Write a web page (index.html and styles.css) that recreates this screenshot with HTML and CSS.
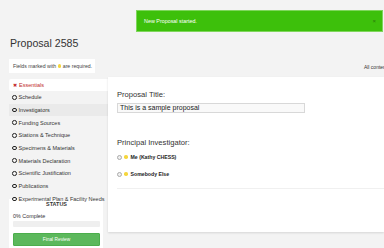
FILE: index.html
```html
<!DOCTYPE html>
<html>
<head>
<meta charset="utf-8">
<link rel="stylesheet" href="styles.css">
</head>
<body>
<div class="toast">
  <span class="toast-text">New Proposal started.</span>
  <span class="toast-close">×</span>
</div>
<div class="page">
  <h1 class="title">Proposal 2585</h1>
  <div class="toolbar">
    <div class="required">Fields marked with <span class="dot"></span> are required.</div>
    <div class="saved">All content saved</div>
  </div>
  <div class="workspace">
    <div class="sidebar">
      <div class="tab-active"><span class="xmark">✖</span>Essentials</div>
      <div class="nav-item"><span class="ring"></span>Schedule</div>
      <div class="nav-item hl"><span class="ring"></span>Investigators</div>
      <div class="nav-item"><span class="ring"></span>Funding Sources</div>
      <div class="nav-item"><span class="ring"></span>Stations &amp; Technique</div>
      <div class="nav-item"><span class="ring"></span>Specimens &amp; Materials</div>
      <div class="nav-item"><span class="ring"></span>Materials Declaration</div>
      <div class="nav-item"><span class="ring"></span>Scientific Justification</div>
      <div class="nav-item"><span class="ring"></span>Publications</div>
      <div class="nav-item"><span class="ring"></span>Experimental Plan &amp; Facility Needs</div>
      <div class="status">
        <div class="status-title">STATUS</div>
        <div class="status-pct">0% Complete</div>
        <div class="progress"></div>
        <div class="btn">Final Review</div>
      </div>
    </div>
    <div class="content">
      <div class="label">Proposal Title:</div>
      <div class="input">This is a sample proposal</div>
      <div class="label pi">Principal Investigator:</div>
      <div class="radio-row"><span class="radio"></span><span class="dot"></span><b>Me (Kathy CHESS)</b></div>
      <div class="radio-row second"><span class="radio"></span><span class="dot"></span><b>Somebody Else</b></div>
      <div class="rule"></div>
    </div>
  </div>
</div>
</body>
</html>
```
FILE: styles.css
```css
html, body {
  margin: 0;
  padding: 0;
  overflow: hidden;
}
body {
  background: #f3f3f3;
  font-family: "Liberation Sans", Arial, sans-serif;
  color: #333;
  width: 384px;
  height: 248px;
}
.toast {
  position: absolute;
  left: 136px;
  top: 10px;
  width: 247px;
  height: 22px;
  box-sizing: border-box;
  background: #3dc00b;
  border: 1px solid #7fd65c;
  display: flex;
  align-items: center;
  justify-content: space-between;
  padding: 0 6px 0 7px;
}
.toast-text {
  color: #fff;
  font-size: 5.4px;
}
.toast-close {
  color: #2a7a0a;
  font-size: 6px;
}
.page {
  padding: 36px 0 0 9px;
}
.title {
  margin: 0 0 0 1px;
  font-size: 10.6px;
  line-height: 14px;
  font-weight: normal;
  color: #333;
}
.toolbar {
  display: flex;
  justify-content: space-between;
  align-items: center;
  margin-top: 9px;
  height: 14px;
}
.required {
  background: #fff;
  height: 14px;
  line-height: 14px;
  padding: 0 3px 0 4px;
  font-size: 5.2px;
  color: #444;
  display: flex;
  align-items: center;
  gap: 1.5px;
}
.dot {
  display: inline-block;
  width: 3.5px;
  height: 3.5px;
  border-radius: 50%;
  background: #f5d63d;
}
.saved {
  font-size: 5px;
  color: #333;
  white-space: nowrap;
  margin-right: -18px;
  margin-top: 2px;
}
.workspace {
  display: flex;
  margin-top: 4px;
}
.sidebar {
  width: 99px;
  flex: none;
  padding-top: 2px;
}
.tab-active {
  height: 12px;
  background: #fff;
  border-radius: 2px 0 0 2px;
  color: #c22a2a;
  font-size: 5.5px;
  display: flex;
  align-items: center;
  padding-left: 4px;
}
.xmark {
  font-size: 5px;
  margin-right: 2px;
}
.nav-item {
  height: 12.7px;
  display: flex;
  align-items: center;
  padding-left: 3px;
  font-size: 5.5px;
  color: #333;
  white-space: nowrap;
}
.nav-item.hl {
  background: #eaeaea;
}
.ring {
  width: 2.6px;
  height: 2.6px;
  border: 1.4px solid #222;
  border-radius: 50%;
  margin-right: 2px;
  flex: none;
}
.status {
  margin-top: -6px;
  width: 94px;
  background: #fff;
  padding: 0 3px 3px 4px;
  box-sizing: border-box;
}
.status-title {
  text-align: center;
  font-weight: bold;
  font-size: 5.4px;
  line-height: 8px;
  padding-top: 1px;
}
.status-pct {
  font-size: 5.4px;
  line-height: 7px;
  margin-top: 5px;
}
.progress {
  height: 6px;
  margin-top: 1px;
  background: #efefef;
  border-radius: 1px;
}
.btn {
  margin-top: 6px;
  height: 13px;
  background: #5cb85c;
  border: 1px solid #4cae4c;
  box-sizing: border-box;
  border-radius: 1px;
  color: #fff;
  font-size: 4.8px;
  display: flex;
  align-items: center;
  justify-content: center;
}
.content {
  flex: 1;
  height: 155px;
  background: #fff;
  box-shadow: 0 1px 2px rgba(0,0,0,0.12);
  padding: 13px 0 0 9px;
  box-sizing: border-box;
}
.label {
  font-size: 7.6px;
  line-height: 10px;
  color: #333;
}
.input {
  margin-top: 3px;
  width: 188px;
  height: 10px;
  box-sizing: border-box;
  border: 1px solid #d8d8d8;
  background: #f9f9f9;
  font-size: 7px;
  line-height: 8px;
  padding-left: 2px;
  color: #222;
}
.label.pi {
  margin-top: 25px;
}
.radio-row {
  display: flex;
  align-items: center;
  height: 8px;
  margin-top: 5px;
  font-size: 5.2px;
  color: #222;
}
.radio-row.second {
  margin-top: 9px;
}
.radio {
  width: 3px;
  height: 3px;
  border: 0.8px solid #aaa;
  border-radius: 50%;
  background: #f0f0f0;
  margin-right: 2px;
}
.radio-row .dot {
  margin-right: 3px;
}
.rule {
  margin-top: 10px;
  height: 1px;
  background: #f0f0f0;
}
```
